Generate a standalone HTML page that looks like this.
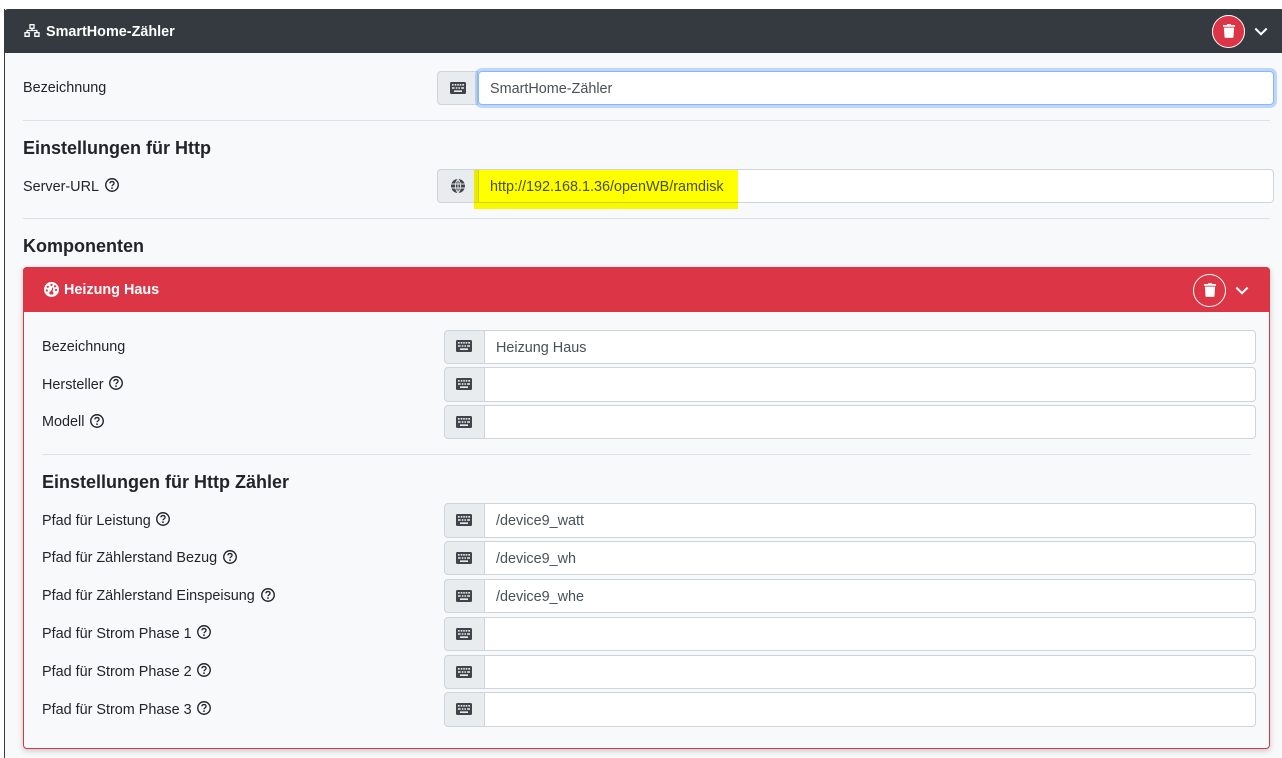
<!DOCTYPE html>
<html lang="de"><head><meta charset="utf-8"><title>SmartHome-Zähler</title>
<style>
html,body{margin:0;padding:0;width:1282px;height:758px;overflow:hidden;background:#f8f9fa;font-family:"Liberation Sans",sans-serif;color:#212529}
body{position:relative}
div,span,svg{position:absolute;box-sizing:border-box}
.t{white-space:nowrap;font-size:14.4px;line-height:18px;color:#212529;margin-top:1px}
.w{color:#fff;font-weight:700;font-size:14.4px}
.h{white-space:nowrap;font-size:18px;line-height:22px;font-weight:700;color:#212529}
.add{background:#e9ecef;border:1px solid #ced4da;border-radius:4px 0 0 4px;width:41px}
.inp{background:#fff;border:1px solid #ced4da;border-radius:0 4px 4px 0;font-size:14.4px;color:#495057;padding-left:11px;white-space:nowrap;line-height:35px}
.hr{height:1px;background:#dee2e6}
</style></head><body>
<svg width="0" height="0" style="position:absolute"><defs>
<symbol id="kb" viewBox="0 0 16 12"><path fill="#3f454b" fill-rule="evenodd" d="M1.300 0h13.400C15.400 0 16 .6 16 1.300v9.400c0 .7-.6 1.300-1.300 1.300H1.300C.6 12 0 11.400 0 10.700V1.300C0 .6.600 0 1.300 0zM2 2v1.600h1.600V2zm2.700 0v1.600h1.600V2zm2.500 0v1.600h1.600V2zm2.500 0v1.600h1.600V2zm2.600 0v1.600H14V2zM2 5.200v1.600h2.600V5.200zm3.800 0v1.600h1.600V5.200zm2.600 0v1.600H10V5.200zm2.700 0v1.600H14V5.200zM4 8.400V10h8V8.400z"/></symbol>
<symbol id="q" viewBox="0.5 0.5 15 15"><circle cx="8" cy="8" r="6.700" fill="none" stroke="#212529" stroke-width="1.500"/><path d="M5.800 6.300C5.800 5 6.800 4.300 8 4.300c1.300 0 2.200.8 2.200 1.900 0 1.700-2.200 1.600-2.200 3.100" fill="none" stroke="#212529" stroke-width="1.400"/><circle cx="8" cy="11.400" r=".95" fill="#212529"/></symbol>
<symbol id="tr" viewBox="0 0 14 16"><path fill="#fff" d="M5 0h4l.6 1H14v2H0V1h4.400zM1 4h12l-.8 11c0 .6-.5 1-1 1H2.800c-.5 0-1-.4-1-1z"/></symbol>
<symbol id="ch" viewBox="0 0 14 9"><path d="M1.300 1.500L7 7.200l5.700-5.700" fill="none" stroke="#fff" stroke-width="2"/></symbol>
</defs></svg>

<div style="left:0;top:0;width:1282px;height:9px;background:#fff"></div>
<div style="left:0;top:9px;width:4px;height:749px;background:#fff"></div>
<div style="left:4px;top:9px;width:1px;height:749px;background:#343a40"></div>
<div style="left:4px;top:9px;width:1278px;height:44px;background:#343a40;border-radius:4px 0 0 0"></div>
<svg style="left:24px;top:24px" width="16" height="13" viewBox="0 0 16 13"><path fill="none" stroke="#fff" stroke-width="1.300" d="M6 .7h4v3.600H6zM1 8.700h4.200v3.600H1zM10.800 8.700H15v3.600h-4.200zM8 4.300v2.200M3.100 8.700V6.500h9.800v2.200"/></svg>
<div class="t w" style="left:46px;top:22px">SmartHome-Zähler</div>
<div style="left:1212px;top:15px;width:33px;height:33px;border-radius:50%;background:#dc3545;border:1px solid #fff"></div>
<svg style="left:1223px;top:24px" width="12" height="14"><use href="#tr"/></svg>
<svg style="left:1254px;top:27px" width="14" height="9"><use href="#ch"/></svg>

<div class="t" style="left:23px;top:78px">Bezeichnung</div>
<div class="add" style="left:437px;top:71px;height:34px"></div>
<svg style="left:450px;top:82px" width="16" height="12"><use href="#kb"/></svg>
<div class="inp" style="left:478px;top:71px;width:796px;height:34px;border-color:#86b7fe;box-shadow:0 0 0 3px rgba(13,110,253,.25);border-radius:4px">SmartHome-Zähler</div>
<div class="hr" style="left:23px;top:120px;width:1247px"></div>

<div class="h" style="left:23px;top:137px">Einstellungen für Http</div>
<div class="t" style="left:23px;top:177px">Server-URL</div>
<svg style="left:105px;top:178px" width="14" height="14"><use href="#q"/></svg>
<div class="add" style="left:437px;top:169px;height:34px;border-right:0"></div>
<svg style="left:451px;top:179px" width="14" height="14" viewBox="0 0 14 14"><circle cx="7" cy="7" r="7" fill="#3f454b"/><path d="M7 0v14M0 5h14M0 9h14M7 0C3.500 4 3.500 10 7 14M7 0c3.500 4 3.500 10 0 14" fill="none" stroke="#e9ecef" stroke-width=".9"/></svg>
<div class="inp" style="left:478px;top:169px;width:796px;height:34px">http://192.168.1.36/openWB/ramdisk</div>
<div style="left:474px;top:170px;width:264px;height:39px;background:#ffff00;mix-blend-mode:multiply"></div>
<div class="hr" style="left:23px;top:218px;width:1247px"></div>

<div class="h" style="left:23px;top:235px">Komponenten</div>

<div style="left:23px;top:267px;width:1247px;height:482px;background:#f8f9fa;border:1px solid #dc3545;border-radius:4px;box-shadow:0 2px 6px rgba(0,0,0,.2)"></div>
<div style="left:23px;top:267px;width:1247px;height:45px;background:#dc3545;border-radius:4px 4px 0 0"></div>
<svg style="left:44px;top:282px" width="15" height="15" viewBox="0 0 15 15"><circle cx="7.500" cy="7.500" r="7.500" fill="#fff"/><g fill="#dc3545"><circle cx="7.500" cy="3" r="1.100"/><circle cx="3.800" cy="4.800" r="1.100"/><circle cx="2.800" cy="8.500" r="1.100"/><circle cx="12" cy="8" r="1.100"/><circle cx="11" cy="4.300" r="1.100"/><path d="M6 12.500a2 2 0 0 1 1-3.500l1.500-3.500 1 .3-1 3.700a2 2 0 0 1 .5 3z"/></g></svg>
<div class="t w" style="left:64px;top:280px">Heizung Haus</div>
<div style="left:1193px;top:274px;width:33px;height:33px;border-radius:50%;background:#dc3545;border:1px solid #fff"></div>
<svg style="left:1204px;top:283px" width="12" height="14"><use href="#tr"/></svg>
<svg style="left:1235px;top:286px" width="14" height="9"><use href="#ch"/></svg>

<div class="t" style="left:42px;top:337px">Bezeichnung</div>
<div class="add" style="left:444px;top:330px;height:34px"></div>
<svg style="left:456px;top:340px" width="16" height="12"><use href="#kb"/></svg>
<div class="inp" style="left:484px;top:330px;width:772px;height:34px">Heizung Haus</div>

<div class="t" style="left:42px;top:375px">Hersteller</div>
<svg style="left:109px;top:376px" width="14" height="14"><use href="#q"/></svg>
<div class="add" style="left:444px;top:367px;height:35px"></div>
<svg style="left:456px;top:378px" width="16" height="12"><use href="#kb"/></svg>
<div class="inp" style="left:484px;top:367px;width:772px;height:35px"></div>

<div class="t" style="left:42px;top:412px">Modell</div>
<svg style="left:90px;top:414px" width="14" height="14"><use href="#q"/></svg>
<div class="add" style="left:444px;top:405px;height:34px"></div>
<svg style="left:456px;top:416px" width="16" height="12"><use href="#kb"/></svg>
<div class="inp" style="left:484px;top:405px;width:772px;height:34px"></div>

<div class="hr" style="left:42px;top:454px;width:1209px"></div>
<div class="h" style="left:42px;top:471px">Einstellungen für Http Zähler</div>

<div class="t" style="left:42px;top:511px">Pfad für Leistung</div>
<svg style="left:156px;top:512px" width="14" height="14"><use href="#q"/></svg>
<div class="add" style="left:444px;top:503px;height:35px"></div>
<svg style="left:456px;top:514px" width="16" height="12"><use href="#kb"/></svg>
<div class="inp" style="left:484px;top:503px;width:772px;height:35px">/device9_watt</div>

<div class="t" style="left:42px;top:548px">Pfad für Zählerstand Bezug</div>
<svg style="left:223px;top:550px" width="14" height="14"><use href="#q"/></svg>
<div class="add" style="left:444px;top:541px;height:34px"></div>
<svg style="left:456px;top:552px" width="16" height="12"><use href="#kb"/></svg>
<div class="inp" style="left:484px;top:541px;width:772px;height:34px">/device9_wh</div>

<div class="t" style="left:42px;top:586px">Pfad für Zählerstand Einspeisung</div>
<svg style="left:261px;top:588px" width="14" height="14"><use href="#q"/></svg>
<div class="add" style="left:444px;top:579px;height:34px"></div>
<svg style="left:456px;top:590px" width="16" height="12"><use href="#kb"/></svg>
<div class="inp" style="left:484px;top:579px;width:772px;height:34px">/device9_whe</div>

<div class="t" style="left:42px;top:624px">Pfad für Strom Phase 1</div>
<svg style="left:197px;top:625px" width="14" height="14"><use href="#q"/></svg>
<div class="add" style="left:444px;top:617px;height:34px"></div>
<svg style="left:456px;top:628px" width="16" height="12"><use href="#kb"/></svg>
<div class="inp" style="left:484px;top:617px;width:772px;height:34px"></div>

<div class="t" style="left:42px;top:662px">Pfad für Strom Phase 2</div>
<svg style="left:197px;top:663px" width="14" height="14"><use href="#q"/></svg>
<div class="add" style="left:444px;top:655px;height:34px"></div>
<svg style="left:456px;top:666px" width="16" height="12"><use href="#kb"/></svg>
<div class="inp" style="left:484px;top:655px;width:772px;height:34px"></div>

<div class="t" style="left:42px;top:700px">Pfad für Strom Phase 3</div>
<svg style="left:197px;top:701px" width="14" height="14"><use href="#q"/></svg>
<div class="add" style="left:444px;top:692px;height:35px"></div>
<svg style="left:456px;top:703px" width="16" height="12"><use href="#kb"/></svg>
<div class="inp" style="left:484px;top:692px;width:772px;height:35px"></div>
</body></html>
